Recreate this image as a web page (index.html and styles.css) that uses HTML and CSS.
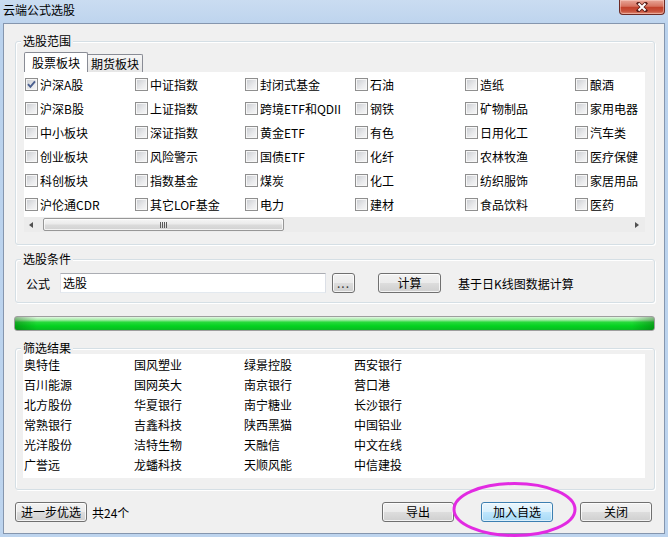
FILE: index.html
```html
<!DOCTYPE html>
<html lang="zh-CN">
<head>
<meta charset="utf-8">
<title>云端公式选股</title>
<link rel="stylesheet" href="styles.css">
</head>
<body>
<div class="window">
  <div class="titlebar">
    <span class="title">云端公式选股</span>
    <span class="close">
      <svg width="12" height="10" viewBox="0 0 12 10"><path d="M2.5 1.5 L9.5 8.5 M9.5 1.5 L2.5 8.5" stroke="#5a1e18" stroke-width="3.6" stroke-linecap="square"/><path d="M2.5 1.5 L9.5 8.5 M9.5 1.5 L2.5 8.5" stroke="#ffffff" stroke-width="2"/></svg>
    </span>
  </div>
  <div class="client">
    <div class="group g1">
      <div class="legend">选股范围</div>
      <div class="tabs">
        <span class="tab active">股票板块</span>
        <span class="tab">期货板块</span>
      </div>
      <div class="panel">
        <label class="item"><span class="cb"><svg width="11" height="11" viewBox="0 0 11 11"><path d="M2 5.2 L4.4 7.8 L9 2.3" fill="none" stroke="#4a5f8f" stroke-width="1.9"/></svg></span>沪深A股</label>
        <label class="item"><span class="cb"></span>中证指数</label>
        <label class="item"><span class="cb"></span>封闭式基金</label>
        <label class="item"><span class="cb"></span>石油</label>
        <label class="item"><span class="cb"></span>造纸</label>
        <label class="item"><span class="cb"></span>酿酒</label>

        <label class="item"><span class="cb"></span>沪深B股</label>
        <label class="item"><span class="cb"></span>上证指数</label>
        <label class="item"><span class="cb"></span>跨境ETF和QDII</label>
        <label class="item"><span class="cb"></span>钢铁</label>
        <label class="item"><span class="cb"></span>矿物制品</label>
        <label class="item"><span class="cb"></span>家用电器</label>

        <label class="item"><span class="cb"></span>中小板块</label>
        <label class="item"><span class="cb"></span>深证指数</label>
        <label class="item"><span class="cb"></span>黄金ETF</label>
        <label class="item"><span class="cb"></span>有色</label>
        <label class="item"><span class="cb"></span>日用化工</label>
        <label class="item"><span class="cb"></span>汽车类</label>

        <label class="item"><span class="cb"></span>创业板块</label>
        <label class="item"><span class="cb"></span>风险警示</label>
        <label class="item"><span class="cb"></span>国债ETF</label>
        <label class="item"><span class="cb"></span>化纤</label>
        <label class="item"><span class="cb"></span>农林牧渔</label>
        <label class="item"><span class="cb"></span>医疗保健</label>

        <label class="item"><span class="cb"></span>科创板块</label>
        <label class="item"><span class="cb"></span>指数基金</label>
        <label class="item"><span class="cb"></span>煤炭</label>
        <label class="item"><span class="cb"></span>化工</label>
        <label class="item"><span class="cb"></span>纺织服饰</label>
        <label class="item"><span class="cb"></span>家居用品</label>

        <label class="item"><span class="cb"></span>沪伦通CDR</label>
        <label class="item"><span class="cb"></span>其它LOF基金</label>
        <label class="item"><span class="cb"></span>电力</label>
        <label class="item"><span class="cb"></span>建材</label>
        <label class="item"><span class="cb"></span>食品饮料</label>
        <label class="item"><span class="cb"></span>医药</label>
      </div>
      <div class="hscroll">
        <span class="arrow left"></span>
        <span class="thumb"><span class="grip"></span></span>
        <span class="arrow right"></span>
      </div>
    </div>

    <div class="group g2">
      <div class="legend">选股条件</div>
      <div class="formula">
        <span class="lbl">公式</span>
        <span class="input">选股</span>
        <span class="btn dots">...</span>
        <span class="btn calc">计算</span>
        <span class="note">基于日K线图数据计算</span>
      </div>
    </div>

    <div class="progress"></div>

    <div class="group g3">
      <div class="legend">筛选结果</div>
      <div class="results">
        <div>奥特佳</div><div>国风塑业</div><div>绿景控股</div><div>西安银行</div>
        <div>百川能源</div><div>国网英大</div><div>南京银行</div><div>营口港</div>
        <div>北方股份</div><div>华夏银行</div><div>南宁糖业</div><div>长沙银行</div>
        <div>常熟银行</div><div>吉鑫科技</div><div>陕西黑猫</div><div>中国铝业</div>
        <div>光洋股份</div><div>洁特生物</div><div>天融信</div><div>中文在线</div>
        <div>广誉远</div><div>龙蟠科技</div><div>天顺风能</div><div>中信建投</div>
      </div>
    </div>

    <div class="footer">
      <span class="btn w72">进一步优选</span>
      <span class="count">共24个</span>
      <span class="btn w72 export">导出</span>
      <span class="btn w72 default">加入自选</span>
      <span class="btn w72">关闭</span>
    </div>
  </div>
  <svg class="annot" width="125" height="55" viewBox="0 0 125 55"><ellipse cx="62.5" cy="27.5" rx="60.5" ry="26" fill="none" stroke="#e22ae2" stroke-width="3"/></svg>
</div>
</body>
</html>
```

FILE: styles.css
```css
* { box-sizing: border-box; }
html, body { margin: 0; padding: 0; }
body {
  width: 668px;
  height: 537px;
  overflow: hidden;
  font-family: "Noto Sans CJK SC", "Liberation Sans", sans-serif;
  font-size: 12px;
  color: #000;
}
.window {
  position: relative;
  width: 668px;
  height: 537px;
  background: linear-gradient(#cadcf1, #bad2ed 30px, #bdd4ee);
  display: flex;
  flex-direction: column;
}
.titlebar {
  flex: none;
  height: 23px;
  display: flex;
  justify-content: space-between;
  align-items: flex-start;
}
.title { padding-left: 3px; line-height: 20px; }
.close {
  width: 46px;
  height: 15px;
  margin-right: 3px;
  border: 1px solid #6d2a24;
  border-top: none;
  border-radius: 0 0 4px 4px;
  background: linear-gradient(#e8a698, #d6725f 45%, #c2412b 52%, #c8513b 80%, #de8c76);
  box-shadow: inset 0 0 0 1px rgba(255, 220, 210, 0.45);
  display: flex;
  align-items: center;
  justify-content: center;
}
.close svg { display: block; }
.client {
  flex: 1;
  margin: 0 3px 3px;
  border: 1px solid #8596ae;
  background: #f0f0f0;
  display: flex;
  flex-direction: column;
  align-items: flex-start;
}
.group {
  width: 640px;
  margin-left: 11px;
  border: 1px solid #d5dfe5;
  border-radius: 3px;
  box-shadow: inset 1px 1px 0 #fff, 1px 1px 0 #fff;
  padding: 0 9px 0 8px;
}
.legend {
  width: max-content;
  margin: -7px 0 0 -3px;
  padding: 0 2px;
  line-height: 12px;
  background: #f0f0f0;
}
.g1 { margin-top: 17px; padding-bottom: 12px; }
.tabs {
  display: flex;
  align-items: flex-end;
  height: 20px;
  margin-top: 5px;
}
.tab {
  height: 18px;
  line-height: 17px;
  padding: 0 3px;
  border: 1px solid #898c95;
  border-left: none;
  border-bottom: none;
  border-radius: 0 2px 0 0;
  background: linear-gradient(#f6f6f6, #e6e6e6);
}
.tab.active {
  height: 20px;
  line-height: 19px;
  padding: 0 7px;
  border-left: 1px solid #898c95;
  border-radius: 2px 2px 0 0;
  background: #fff;
}
.panel {
  width: 621px;
  height: 145px;
  background: #fff;
  display: grid;
  grid-template-columns: repeat(6, 110px);
  grid-auto-rows: 24px;
  overflow: hidden;
}
.item {
  display: flex;
  align-items: center;
  white-space: nowrap;
  padding-left: 1px;
}
.cb {
  flex: none;
  width: 13px;
  height: 13px;
  margin-right: 2px;
  border: 1px solid #8f8f8f;
  background: linear-gradient(135deg, #c8cbd0, #e9eaec 60%, #f8f8f8);
  box-shadow: inset 0 0 0 1px #f6f6f6;
}
.cb svg { display: block; }
.hscroll {
  width: 621px;
  height: 15px;
  background: #ececec;
  display: flex;
  align-items: center;
}
.arrow { width: 0; height: 0; border-top: 3.5px solid transparent; border-bottom: 3.5px solid transparent; }
.arrow.left { margin-left: 5px; border-right: 4px solid #505050; }
.arrow.right { margin-left: auto; margin-right: 6px; border-left: 4px solid #505050; }
.thumb {
  width: 241px;
  height: 13px;
  margin-left: 10px;
  border: 1px solid #979797;
  border-radius: 2px;
  background: linear-gradient(#f6f6f6, #ebebeb 45%, #dbdbdb 55%, #d2d2d2);
  box-shadow: inset 0 0 0 1px rgba(255, 255, 255, 0.7);
  display: flex;
  align-items: center;
  justify-content: center;
}
.grip {
  width: 7px;
  height: 6px;
  background: repeating-linear-gradient(to right, #5a5a5a 0 1px, transparent 1px 2px);
}
.g2 { margin-top: 14px; padding-bottom: 9px; }
.formula {
  margin-top: 8px;
  height: 20px;
  display: flex;
  align-items: center;
}
.lbl { margin-left: 2px; }
.input {
  width: 266px;
  height: 20px;
  margin-left: 10px;
  border: 1px solid;
  border-color: #abadb3 #dbdfe6 #e3e9ef #e2e3ea;
  background: #fff;
  padding-left: 2px;
  line-height: 18px;
}
.btn {
  display: flex;
  align-items: center;
  justify-content: center;
  height: 20px;
  border: 1px solid #707070;
  border-radius: 3px;
  background: linear-gradient(#f2f2f2 0%, #ebebeb 49%, #dddddd 51%, #cfcfcf 100%);
  box-shadow: inset 0 0 0 1px rgba(255, 255, 255, 0.75);
  white-space: nowrap;
  line-height: 18px;
}
.dots { width: 23px; margin-left: 6px; letter-spacing: 1px; color: #333; }
.calc { width: 63px; margin-left: 23px; }
.note { margin-left: 17px; }
.progress {
  width: 641px;
  height: 15px;
  margin: 13px 0 0 10px;
  border: 1px solid #9e9e9e;
  border-radius: 3px;
  background:
    linear-gradient(to right, rgba(0, 70, 0, 0.35), rgba(0, 70, 0, 0) 22px, rgba(0, 70, 0, 0) calc(100% - 22px), rgba(0, 70, 0, 0.35)),
    linear-gradient(#e2f8e2 0%, #a6eca8 22%, #27d93b 40%, #03d21f 70%, #0ab823 100%);
}
.g3 { margin-top: 17px; padding: 0 9px 11px 7px; }
.g3 .legend { margin-left: -2px; }
.results {
  width: 622px;
  height: 124px;
  background: #fff;
  padding: 0 0 4px 1px;
  display: grid;
  grid-template-columns: repeat(4, 110px);
  grid-auto-rows: 20px;
  align-items: center;
  white-space: nowrap;
}
.footer {
  width: 649px;
  height: 20px;
  margin: 12px 0 0 11px;
  padding-right: 12px;
  display: flex;
  align-items: center;
}
.w72 { width: 72px; }
.count { margin-left: 5px; }
.export { margin-left: auto; }
.default {
  margin-left: 27px;
  border-color: #3c7fb1;
  background: linear-gradient(#eaf6fd 0%, #d9f0fc 49%, #bee6fd 51%, #a7d9f5 100%);
  box-shadow: inset 0 0 0 1px rgba(255, 255, 255, 0.6);
}
.default + .btn { margin-left: 27px; }
.annot {
  position: absolute;
  left: 452px;
  top: 482px;
}
```
